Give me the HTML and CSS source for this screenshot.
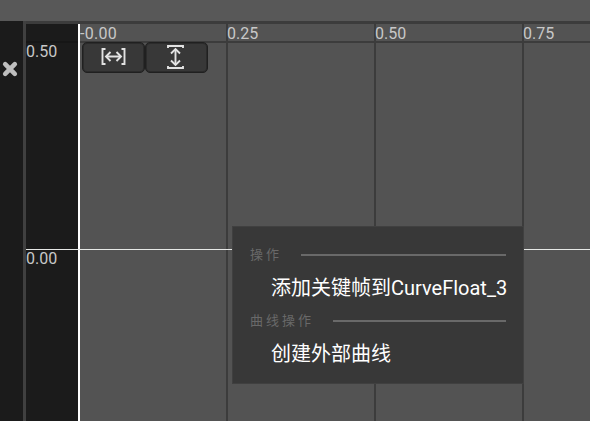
FILE: index.html
```html
<!DOCTYPE html>
<html lang="zh-CN">
<head>
<meta charset="utf-8">
<title>Curve Editor</title>
<link rel="stylesheet" href="styles.css">
</head>
<body>
<div class="editor">
  <header class="topbar"></header>
  <main class="workspace">
    <aside class="sidebar">
      <svg class="close" width="18" height="18" viewBox="0 0 18 18"><path d="M4.2 4.2L13.800 13.800M13.800 4.2L4.2 13.800"/></svg>
    </aside>
    <div class="splitter"></div>
    <section class="curve">
      <div class="axis">
        <div class="axis-head"></div>
        <div class="axis-cell upper">0.50</div>
        <div class="axis-cell lower">0.00</div>
      </div>
      <div class="plot">
        <div class="ruler">
          <div class="tick first"><span>-0.00</span></div>
          <div class="tick"><span>0.25</span></div>
          <div class="tick"><span>0.50</span></div>
          <div class="tick"><span>0.75</span></div>
        </div>
        <div class="columns"><i class="first"></i><i></i><i></i><i></i></div>
        <div class="tools">
          <button class="tool" aria-label="Fit horizontal">
            <svg width="26" height="20" viewBox="0 0 26 20"><path d="M4.500 2H1.500V17H4.500M20.500 2H23.500V17H20.500M5 9.500H20"/><path d="M9.500 5L5 9.500L9.500 14M15.500 5L20 9.500L15.500 14"/></svg>
          </button>
          <button class="tool" aria-label="Fit vertical">
            <svg width="20" height="26" viewBox="0 0 20 26"><path d="M1 4V2H16V4M1 22V24H16V22M8.500 5V21"/><path d="M4 9.500L8.500 5L13 9.500M4 16.500L8.500 21L13 16.500"/></svg>
          </button>
        </div>
      </div>
      <div class="zero"></div>
    </section>
  </main>
  <div class="menu">
    <div class="section"><span>操作</span><hr></div>
    <div class="item">添加关键帧到CurveFloat_3</div>
    <div class="section second"><span>曲线操作</span><hr></div>
    <div class="item">创建外部曲线</div>
  </div>
</div>
</body>
</html>
```
FILE: styles.css
```css
* { box-sizing: border-box; }
body {
  margin: 0;
  font: 16px/18px Roboto, "Noto Sans CJK SC", sans-serif;
  color: #c8c8c8;
  overflow: hidden;
}
.editor {
  position: relative;
  display: flex;
  flex-direction: column;
  width: 590px;
  height: 421px;
  background: #535353;
}
.topbar { height: 21px; background: #585858; }
.workspace { flex: 1; display: flex; }
.sidebar { width: 23px; background: #1b1b1b; padding: 39px 0 0 1px; }
.close { display: block; fill: none; stroke: #bebebe; stroke-width: 4.6; stroke-linecap: round; }
.splitter { width: 3px; background: #404040; }
.curve {
  position: relative;
  flex: 1;
  display: flex;
  border-top: 3px solid #3c3c3c;
}
.axis {
  width: 54px;
  background: #1b1b1b;
  border-right: 2px solid #fff;
}
.axis-head { height: 19px; border-bottom: 2px solid #161616; }
.upper { height: 206px; }
.lower { padding-top: 1px; }
.plot { position: relative; flex: 1; display: flex; flex-direction: column; }
.ruler, .columns { display: grid; grid-template-columns: 146px 148px 148px 1fr; }
.ruler { height: 19px; border-bottom: 2px solid #3c3c3c; }
.columns { flex: 1; }
.tick, .columns i { border-left: 2px solid #3c3c3c; }
.tick { line-height: 19px; height: 17px; }
.tick span { display: block; margin-left: -1px; }
.first, .columns .first { border-left: 0; }
.tick.first span { margin-left: 0; letter-spacing: 0.3px; }
.tools { position: absolute; left: 2px; top: 18px; display: flex; }
.tool {
  width: 63px;
  height: 31px;
  padding: 0 0 1px;
  display: flex;
  align-items: center;
  justify-content: center;
  background: #383838;
  border: 1px solid #202020;
  box-shadow: inset 0 0 0 1px #2b2b2b;
  border-radius: 5px;
}
.tool svg { fill: none; stroke: #e2e2e2; stroke-width: 1.9; }
.zero { position: absolute; left: 0; right: 0; top: 225px; height: 1px; background: #e6e8e6; }
.menu {
  position: absolute;
  left: 232px;
  top: 226px;
  width: 292px;
  height: 158px;
  padding: 16px 17px 0 17px;
  background: #383838;
  border: 1px solid #404040;
}
.section {
  display: flex;
  align-items: center;
  height: 23px;
  color: #696969;
  font-size: 13px;
  letter-spacing: 3px;
}
.section hr { flex: 1; height: 2px; margin: 0 0 0 19px; border: 0; background: #696969; }
.item {
  height: 43px;
  padding-left: 21px;
  line-height: 44px;
  font-size: 20px;
  color: #fff;
  white-space: nowrap;
}
```
